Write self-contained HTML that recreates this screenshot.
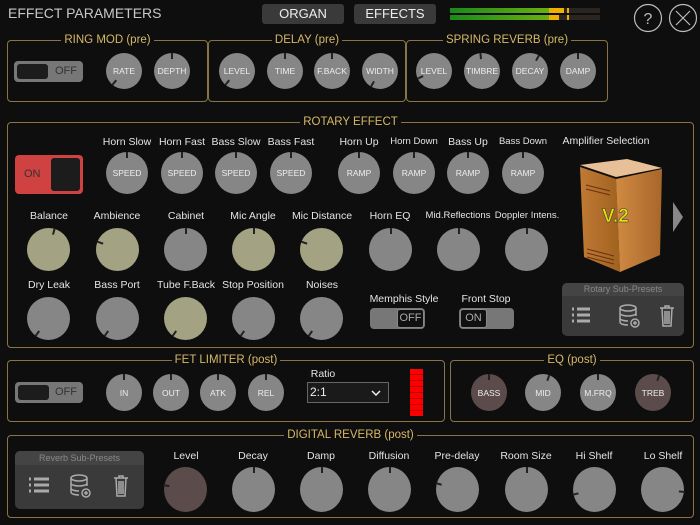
<!DOCTYPE html><html><head><meta charset="utf-8"><style>
*{box-sizing:border-box;margin:0;padding:0}
body{width:700px;height:525px;background:#0e0e0e;position:relative;overflow:hidden;font-family:"Liberation Sans",sans-serif;color:#ddd}
.a{position:absolute}
.box{position:absolute;border:1.5px solid #8a7445;border-radius:4px}
.tt{position:absolute;top:-8px;left:0;right:0;text-align:center;font-size:11.5px;color:#d6b866;line-height:14px}
.tt span{background:#0e0e0e;padding:0 3px}
.k{position:absolute;border-radius:50%;background:#868686;display:flex;align-items:center;justify-content:center;font-size:8.5px;color:#eee}
.k i{position:absolute;left:0;top:0;width:100%;height:100%;transform:rotate(var(--r,0deg))}
.k i:before{content:"";position:absolute;left:50%;top:0;width:2px;margin-left:-1px;height:6px;background:#222}
.o{background:#a3a283}
.b{background:#5b4b4b}
.l{position:absolute;font-size:10.5px;color:#e4e4e4;text-align:center;width:90px;margin-left:-45px;white-space:nowrap}
.tg{position:absolute;background:#777;border-radius:4px}
.btn{position:absolute;background:#3a3a3a;border-radius:3px;color:#eee;font-size:13px;text-align:center;line-height:20px}
</style></head><body>
<div class="a" style="left:8px;top:5px;font-size:14px;color:#c8c8c8">EFFECT PARAMETERS</div>
<div class="btn" style="left:262px;top:4px;width:82px;height:20px">ORGAN</div>
<div class="btn" style="left:354px;top:4px;width:82px;height:20px">EFFECTS</div>
<div class="a" style="left:450px;top:8px;width:150px;height:5px;background:#2a2520"><div class="a" style="left:0;top:0;width:99px;height:5px;background:linear-gradient(90deg,#1a8a1a,#6ab010)"></div><div class="a" style="left:99px;top:0;width:15px;height:5px;background:#f0b000"></div><div class="a" style="left:117px;top:0;width:2px;height:5px;background:#f0b000"></div></div>
<div class="a" style="left:450px;top:15px;width:150px;height:5px;background:#2a2520"><div class="a" style="left:0;top:0;width:99px;height:5px;background:linear-gradient(90deg,#1a8a1a,#6ab010)"></div><div class="a" style="left:99px;top:0;width:10px;height:5px;background:#f0b000"></div><div class="a" style="left:117px;top:0;width:2px;height:5px;background:#f0b000"></div></div>
<svg class="a" style="left:633px;top:3px" width="66" height="30" fill="none" stroke="#bbb" stroke-width="1.2"><circle cx="15" cy="15" r="13.5"/><circle cx="50" cy="15" r="13.5"/><path d="M43 8l14 14M57 8l-14 14"/><text x="15" y="21" text-anchor="middle" font-family="Liberation Sans" font-size="16" fill="#bbb" stroke="none">?</text></svg>

<div class="box" style="left:7px;top:40px;width:201px;height:62px"><div class="tt"><span>RING MOD (pre)</span></div></div>
<div class="box" style="left:208px;top:40px;width:198px;height:62px"><div class="tt"><span>DELAY (pre)</span></div></div>
<div class="box" style="left:406px;top:40px;width:202px;height:62px"><div class="tt"><span>SPRING REVERB (pre)</span></div></div>
<div class="tg" style="left:14px;top:61px;width:69px;height:21px"><div class="a" style="left:3px;top:3px;width:31px;height:15px;background:#1c1c1c;border-radius:3px"></div><div class="a" style="left:41px;top:4px;font-size:11px;color:#333">OFF</div></div>
<div class="k" style="left:106px;top:53px;width:36px;height:36px;--r:-140deg"><i></i>RATE</div>
<div class="k" style="left:154px;top:53px;width:36px;height:36px"><i></i>DEPTH</div>
<div class="k" style="left:219px;top:53px;width:36px;height:36px;--r:-140deg"><i></i>LEVEL</div>
<div class="k" style="left:267px;top:53px;width:36px;height:36px"><i></i>TIME</div>
<div class="k" style="left:314px;top:53px;width:36px;height:36px"><i></i>F.BACK</div>
<div class="k" style="left:362px;top:53px;width:36px;height:36px;--r:-150deg"><i></i>WIDTH</div>
<div class="k" style="left:416px;top:53px;width:36px;height:36px;--r:-115deg"><i></i>LEVEL</div>
<div class="k" style="left:464px;top:53px;width:36px;height:36px;--r:-5deg"><i></i>TIMBRE</div>
<div class="k" style="left:512px;top:53px;width:36px;height:36px;--r:30deg"><i></i>DECAY</div>
<div class="k" style="left:560px;top:53px;width:36px;height:36px"><i></i>DAMP</div>

<div class="box" style="left:7px;top:122px;width:687px;height:226px"><div class="tt"><span>ROTARY EFFECT</span></div></div>
<div class="a" style="left:15px;top:155px;width:68px;height:39px;background:#d04141;border-radius:4px"><div class="a" style="left:36px;top:3px;width:29px;height:33px;background:#1c1c1c;border-radius:3px"></div><div class="a" style="left:9px;top:13px;font-size:11px;color:#333">ON</div></div>
<div class="l" style="left:127px;top:136px">Horn Slow</div><div class="l" style="left:182px;top:136px">Horn Fast</div><div class="l" style="left:236px;top:136px">Bass Slow</div><div class="l" style="left:291px;top:136px">Bass Fast</div>
<div class="l" style="left:359px;top:136px">Horn Up</div><div class="l" style="left:414px;top:136px;font-size:9.5px">Horn Down</div><div class="l" style="left:468px;top:136px">Bass Up</div><div class="l" style="left:523px;top:136px;font-size:9.5px">Bass Down</div>
<div class="k" style="left:106px;top:152px;width:42px;height:42px"><i></i>SPEED</div>
<div class="k" style="left:161px;top:152px;width:42px;height:42px"><i></i>SPEED</div>
<div class="k" style="left:215px;top:152px;width:42px;height:42px"><i></i>SPEED</div>
<div class="k" style="left:270px;top:152px;width:42px;height:42px"><i></i>SPEED</div>
<div class="k" style="left:338px;top:152px;width:42px;height:42px"><i></i>RAMP</div>
<div class="k" style="left:393px;top:152px;width:42px;height:42px"><i></i>RAMP</div>
<div class="k" style="left:447px;top:152px;width:42px;height:42px"><i></i>RAMP</div>
<div class="k" style="left:502px;top:152px;width:42px;height:42px"><i></i>RAMP</div>
<div class="l" style="left:49px;top:210px">Balance</div><div class="l" style="left:117px;top:210px">Ambience</div><div class="l" style="left:186px;top:210px">Cabinet</div><div class="l" style="left:253px;top:210px">Mic Angle</div><div class="l" style="left:322px;top:210px">Mic Distance</div><div class="l" style="left:390px;top:210px">Horn EQ</div><div class="l" style="left:458px;top:210px;font-size:9.5px">Mid.Reflections</div><div class="l" style="left:527px;top:210px;font-size:9.5px">Doppler Intens.</div>
<div class="k o" style="left:27px;top:228px;width:43px;height:43px;--r:15deg"><i></i></div>
<div class="k o" style="left:96px;top:228px;width:43px;height:43px;--r:-70deg"><i></i></div>
<div class="k" style="left:164px;top:228px;width:43px;height:43px"><i></i></div>
<div class="k o" style="left:232px;top:228px;width:43px;height:43px"><i></i></div>
<div class="k o" style="left:300px;top:228px;width:43px;height:43px;--r:-70deg"><i></i></div>
<div class="k" style="left:369px;top:228px;width:43px;height:43px"><i></i></div>
<div class="k" style="left:437px;top:228px;width:43px;height:43px"><i></i></div>
<div class="k" style="left:505px;top:228px;width:43px;height:43px"><i></i></div>
<div class="l" style="left:49px;top:279px">Dry Leak</div><div class="l" style="left:117px;top:279px">Bass Port</div><div class="l" style="left:186px;top:279px">Tube F.Back</div><div class="l" style="left:253px;top:279px">Stop Position</div><div class="l" style="left:322px;top:279px">Noises</div>
<div class="k" style="left:27px;top:297px;width:43px;height:43px;--r:-145deg"><i></i></div>
<div class="k" style="left:96px;top:297px;width:43px;height:43px;--r:-145deg"><i></i></div>
<div class="k o" style="left:164px;top:297px;width:43px;height:43px;--r:-145deg"><i></i></div>
<div class="k" style="left:232px;top:297px;width:43px;height:43px;--r:-145deg"><i></i></div>
<div class="k" style="left:300px;top:297px;width:43px;height:43px;--r:-145deg"><i></i></div>
<div class="l" style="left:404px;top:293px">Memphis Style</div><div class="l" style="left:486px;top:293px">Front Stop</div>
<div class="tg" style="left:370px;top:308px;width:55px;height:21px"><div class="a" style="left:27px;top:1px;width:27px;height:19px;background:#111;border:1px solid #888;border-radius:3px;font-size:11px;color:#aaa;text-align:center;line-height:17px">OFF</div></div>
<div class="tg" style="left:459px;top:308px;width:55px;height:21px"><div class="a" style="left:1px;top:1px;width:27px;height:19px;background:#111;border:1px solid #888;border-radius:3px;font-size:11px;color:#aaa;text-align:center;line-height:17px">ON</div></div>
<div class="l" style="left:606px;top:135px">Amplifier Selection</div>
<svg class="a" style="left:570px;top:155px" width="120" height="120">
<defs><linearGradient id="w1" x1="0" x2="1"><stop offset="0" stop-color="#c07a35"/><stop offset="1" stop-color="#a0621f"/></linearGradient><linearGradient id="w2" x1="0" x2="1"><stop offset="0" stop-color="#d08a42"/><stop offset="1" stop-color="#a8662a"/></linearGradient></defs>
<polygon points="10,10 57,4 92,13 46,22" fill="#e8c098"/>
<polygon points="10,12 46,24 50,117 14,102" fill="url(#w1)"/>
<polygon points="46,24 92,14 90,100 50,117" fill="url(#w2)"/>
<g stroke="#6a3010" stroke-width="1"><line x1="16" y1="30" x2="40" y2="36"/><line x1="16" y1="34" x2="40" y2="40"/><line x1="17" y1="94" x2="44" y2="101"/><line x1="17" y1="98" x2="44" y2="105"/><line x1="17" y1="102" x2="44" y2="109"/></g>
<text x="32" y="67" font-family="Liberation Sans" font-weight="bold" font-size="19" fill="#e6e010" stroke="#333" stroke-width="0.5">V.2</text>
<polygon points="103,47 113,62 103,77" fill="#888"/>
</svg>
<div class="a" style="left:562px;top:283px;width:122px;height:53px;background:#3a3a3a;border-radius:5px"><div style="height:13px;background:#444;border-radius:5px 5px 0 0;font-size:9px;color:#888;text-align:center;line-height:13px">Rotary Sub-Presets</div>
<svg class="a" style="left:8px;top:20px" width="110" height="28" fill="none" stroke="#aaa" stroke-width="1.5"><g stroke-width="3"><line x1="2" y1="6" x2="4" y2="6"/><line x1="2" y1="12" x2="4" y2="12"/><line x1="2" y1="18" x2="4" y2="18"/><line x1="7" y1="6" x2="20" y2="6"/><line x1="7" y1="12" x2="20" y2="12"/><line x1="7" y1="18" x2="20" y2="18"/></g><ellipse cx="58" cy="5" rx="8" ry="3"/><path d="M50 5v14c0 2 4 3 8 3M66 5v8M50 10c0 2 4 3 8 3s8-1 8-3M50 15c0 2 4 3 8 3"/><circle cx="65" cy="20" r="4"/><path d="M63 20h4M65 18v4"/><path d="M90 5h14M95 5v-2h4v2M92 5l1 18h8l1-18M95 8v13M97 8v13M99 8v13"/></svg></div>

<div class="box" style="left:7px;top:360px;width:438px;height:62px"><div class="tt"><span>FET LIMITER (post)</span></div></div>
<div class="box" style="left:450px;top:360px;width:244px;height:62px"><div class="tt"><span>EQ (post)</span></div></div>
<div class="tg" style="left:15px;top:382px;width:68px;height:21px"><div class="a" style="left:3px;top:3px;width:31px;height:15px;background:#1c1c1c;border-radius:3px"></div><div class="a" style="left:40px;top:4px;font-size:11px;color:#333">OFF</div></div>
<div class="k" style="left:106px;top:374px;width:36px;height:37px"><i></i>IN</div>
<div class="k" style="left:153px;top:374px;width:36px;height:37px"><i></i>OUT</div>
<div class="k" style="left:200px;top:374px;width:36px;height:37px"><i></i>ATK</div>
<div class="k" style="left:248px;top:374px;width:36px;height:37px"><i></i>REL</div>
<div class="l" style="left:323px;top:368px">Ratio</div>
<div class="a" style="left:307px;top:382px;width:82px;height:21px;border:1.5px solid #666;background:#1a1a1a;font-size:12px;color:#eee;padding-left:2px;line-height:18px">2:1<svg class="a" style="right:7px;top:7px" width="10" height="6" fill="none" stroke="#eee" stroke-width="1.5"><path d="M1 1l4 4 4-4"/></svg></div>
<div class="a" style="left:410px;top:369px;width:13px;height:47px;background:repeating-linear-gradient(180deg,#f00 0 5px,#b00 5px 6px)"></div>
<div class="k b" style="left:471px;top:374px;width:36px;height:37px"><i></i>BASS</div>
<div class="k" style="left:525px;top:374px;width:36px;height:37px;--r:20deg"><i></i>MID</div>
<div class="k" style="left:580px;top:374px;width:36px;height:37px"><i></i>M.FRQ</div>
<div class="k b" style="left:635px;top:374px;width:36px;height:37px;--r:20deg"><i></i>TREB</div>

<div class="box" style="left:7px;top:435px;width:687px;height:83px"><div class="tt"><span>DIGITAL REVERB (post)</span></div></div>
<div class="a" style="left:15px;top:451px;width:129px;height:58px;background:#3a3a3a;border-radius:5px"><div style="height:14px;background:#444;border-radius:5px 5px 0 0;font-size:9px;color:#888;text-align:center;line-height:14px">Reverb Sub-Presets</div>
<svg class="a" style="left:12px;top:22px" width="110" height="30" fill="none" stroke="#aaa" stroke-width="1.5"><g stroke-width="3"><line x1="2" y1="6" x2="4" y2="6"/><line x1="2" y1="12" x2="4" y2="12"/><line x1="2" y1="18" x2="4" y2="18"/><line x1="7" y1="6" x2="22" y2="6"/><line x1="7" y1="12" x2="22" y2="12"/><line x1="7" y1="18" x2="22" y2="18"/></g><ellipse cx="52" cy="5" rx="8" ry="3"/><path d="M44 5v14c0 2 4 3 8 3M60 5v8M44 10c0 2 4 3 8 3s8-1 8-3M44 15c0 2 4 3 8 3"/><circle cx="59" cy="20" r="4"/><path d="M57 20h4M59 18v4"/><path d="M87 5h14M92 5v-2h4v2M89 5l1 18h8l1-18M92 8v13M94 8v13M96 8v13"/></svg></div>
<div class="l" style="left:186px;top:450px">Level</div><div class="l" style="left:253px;top:450px">Decay</div><div class="l" style="left:321px;top:450px">Damp</div><div class="l" style="left:389px;top:450px">Diffusion</div><div class="l" style="left:457px;top:450px">Pre-delay</div><div class="l" style="left:526px;top:450px">Room Size</div><div class="l" style="left:594px;top:450px">Hi Shelf</div><div class="l" style="left:663px;top:450px">Lo Shelf</div>
<div class="k b" style="left:164px;top:467px;width:43px;height:45px;--r:-80deg"><i></i></div>
<div class="k" style="left:232px;top:467px;width:43px;height:45px"><i></i></div>
<div class="k" style="left:300px;top:467px;width:43px;height:45px"><i></i></div>
<div class="k" style="left:368px;top:467px;width:43px;height:45px"><i></i></div>
<div class="k" style="left:436px;top:467px;width:43px;height:45px;--r:-75deg"><i></i></div>
<div class="k" style="left:505px;top:467px;width:43px;height:45px"><i></i></div>
<div class="k" style="left:573px;top:467px;width:43px;height:45px;--r:-105deg"><i></i></div>
<div class="k" style="left:641px;top:467px;width:43px;height:45px;--r:95deg"><i></i></div>
</body></html>
